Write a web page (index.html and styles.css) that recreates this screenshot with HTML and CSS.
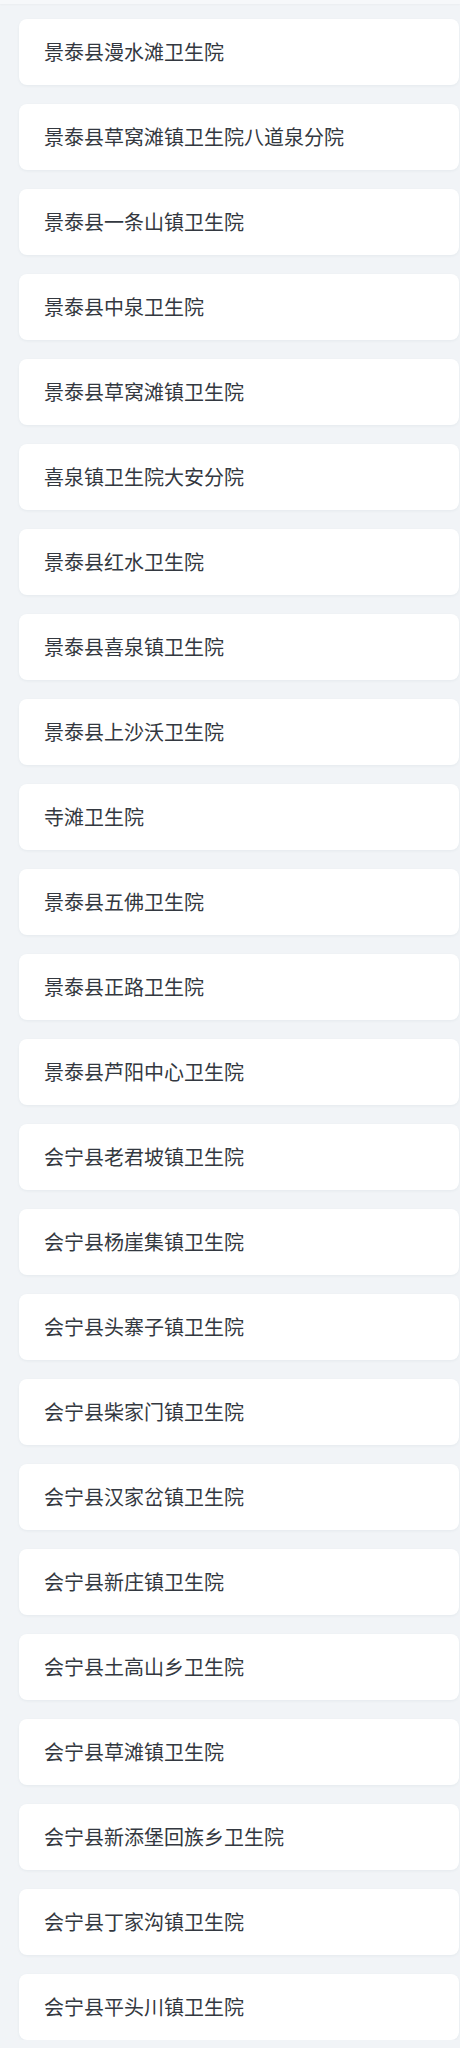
FILE: index.html
```html
<!DOCTYPE html>
<html lang="zh-CN">
<head>
<meta charset="utf-8">
<title>卫生院列表</title>
<link rel="stylesheet" href="styles.css">
</head>
<body>
<div class="topbar"></div>
<ul class="list">
<li class="item">景泰县漫水滩卫生院</li>
<li class="item">景泰县草窝滩镇卫生院八道泉分院</li>
<li class="item">景泰县一条山镇卫生院</li>
<li class="item">景泰县中泉卫生院</li>
<li class="item">景泰县草窝滩镇卫生院</li>
<li class="item">喜泉镇卫生院大安分院</li>
<li class="item">景泰县红水卫生院</li>
<li class="item">景泰县喜泉镇卫生院</li>
<li class="item">景泰县上沙沃卫生院</li>
<li class="item">寺滩卫生院</li>
<li class="item">景泰县五佛卫生院</li>
<li class="item">景泰县正路卫生院</li>
<li class="item">景泰县芦阳中心卫生院</li>
<li class="item">会宁县老君坡镇卫生院</li>
<li class="item">会宁县杨崖集镇卫生院</li>
<li class="item">会宁县头寨子镇卫生院</li>
<li class="item">会宁县柴家门镇卫生院</li>
<li class="item">会宁县汉家岔镇卫生院</li>
<li class="item">会宁县新庄镇卫生院</li>
<li class="item">会宁县土高山乡卫生院</li>
<li class="item">会宁县草滩镇卫生院</li>
<li class="item">会宁县新添堡回族乡卫生院</li>
<li class="item">会宁县丁家沟镇卫生院</li>
<li class="item">会宁县平头川镇卫生院</li>
</ul>
</body>
</html>
```
FILE: styles.css
```css
html, body {
  margin: 0;
  padding: 0;
  background: #f1f4f7;
}
body {
  font-family: "Noto Sans CJK SC", "Noto Sans", sans-serif;
  color: #333840;
  overflow: hidden;
}
.topbar {
  height: 4px;
  background: #f6f8fa;
  box-shadow: 0 1px 2px rgba(0, 0, 0, 0.03);
}
.list {
  list-style: none;
  margin: 0;
  padding: 15px 0 0 19px;
  display: flex;
  flex-direction: column;
  gap: 19px;
}
.item {
  width: 440px;
  height: 66px;
  box-sizing: border-box;
  background: #ffffff;
  border-radius: 8px;
  box-shadow: 0 1px 3px rgba(40, 60, 80, 0.06);
  display: flex;
  align-items: center;
  padding-left: 25px;
  font-size: 20px;
  line-height: 1;
}
```
